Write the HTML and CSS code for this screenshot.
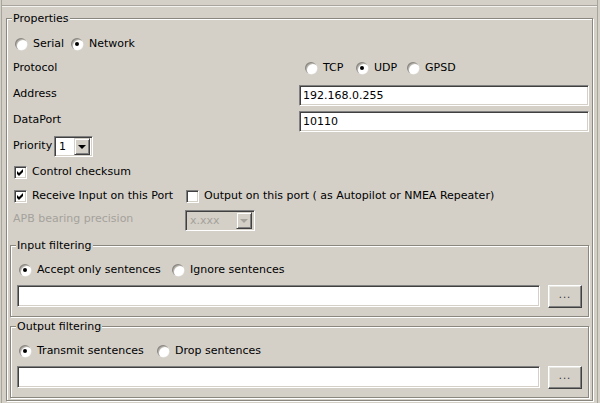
FILE: index.html
```html
<!DOCTYPE html>
<html>
<head>
<meta charset="utf-8">
<link rel="stylesheet" href="styles.css">
</head>
<body>
<div class="frame">
  <div class="topstrip"></div>
  <div class="group props">
    <div class="group-title title-props">Properties</div>

    <div class="row r-conn">
      <label class="opt w-serial"><span class="radio"></span>Serial</label>
      <label class="opt"><span class="radio on"></span>Network</label>
    </div>

    <div class="field r-proto">
      <span class="lbl">Protocol</span>
      <div class="proto">
        <label class="opt w-tcp"><span class="radio"></span>TCP</label>
        <label class="opt w-udp"><span class="radio on"></span>UDP</label>
        <label class="opt"><span class="radio"></span>GPSD</label>
      </div>
    </div>

    <div class="field r-addr">
      <span class="lbl lbl-top">Address</span>
      <div class="input grow">192.168.0.255</div>
    </div>

    <div class="field r-port">
      <span class="lbl lbl-top">DataPort</span>
      <div class="input grow">10110</div>
    </div>

    <div class="row r-prio">
      <span class="lbl-prio">Priority</span>
      <div class="combo combo-prio">
        <span class="combo-text">1</span>
        <span class="combo-btn"><span class="arrow"></span></span>
      </div>
    </div>

    <div class="row r-chk1">
      <label class="opt"><span class="check on"><svg width="13" height="13" viewBox="0 0 13 13"><polygon points="3,5 5,7 9,3 9,6 5,10 3,8" fill="#000"/></svg></span>Control checksum</label>
    </div>

    <div class="row twocol r-chk2">
      <label class="opt"><span class="check on"><svg width="13" height="13" viewBox="0 0 13 13"><polygon points="3,5 5,7 9,3 9,6 5,10 3,8" fill="#000"/></svg></span>Receive Input on this Port</label>
      <label class="opt"><span class="check"></span>Output on this port ( as Autopilot or NMEA Repeater)</label>
    </div>

    <div class="row twocol r-apb">
      <span class="disabled lbl-top">APB bearing precision</span>
      <div class="combo combo-apb">
        <span class="combo-text">x.xxx</span>
        <span class="combo-btn"><span class="arrow"></span></span>
      </div>
    </div>

    <div class="group sub g-in">
      <div class="group-title title-sub">Input filtering</div>
      <div class="row sub-radios">
        <label class="opt w-accept"><span class="radio on"></span>Accept only sentences</label>
        <label class="opt"><span class="radio"></span>Ignore sentences</label>
      </div>
      <div class="editrow">
        <div class="input grow"></div>
        <div class="btn">...</div>
      </div>
    </div>

    <div class="group sub g-out">
      <div class="group-title title-sub">Output filtering</div>
      <div class="row sub-radios">
        <label class="opt w-transmit"><span class="radio on"></span>Transmit sentences</label>
        <label class="opt"><span class="radio"></span>Drop sentences</label>
      </div>
      <div class="editrow">
        <div class="input grow"></div>
        <div class="btn">...</div>
      </div>
    </div>
  </div>
</div>
</body>
</html>
```

FILE: styles.css
```css
html, body {
  margin: 0;
  padding: 0;
}

body {
  width: 600px;
  height: 403px;
  overflow: hidden;
  background: #d4d0c8;
  color: #000;
  font-family: "DejaVu Sans", Verdana, sans-serif;
  font-size: 11px;
  line-height: 16px;
}

.frame {
  margin-left: 1px;
  width: 597px;
  height: 403px;
  box-sizing: border-box;
  border-left: 1px solid #a8a59f;
  border-right: 1px solid #a8a59f;
  padding: 0 4px 0 4px;
}

.topstrip {
  height: 5px;
  margin: 0 -4px 0 -4px;
  border-bottom: 1px solid #a8a59f;
  box-shadow: 0 1px 0 #f4f3f0;
}

/* etched group box */
.group {
  border: 1px solid #8a877f;
  box-shadow: inset 1px 1px 0 #fff, 1px 1px 0 #fff;
}

.group-title {
  width: max-content;
  line-height: 14px;
  margin-top: -7px;
  padding: 0 1px;
  background: #d4d0c8;
}

.props {
  margin-top: 12px;
  width: 587px;
  box-sizing: border-box;
  padding: 0 3px 2px 3px;
}

.title-props {
  margin-left: 2px;
}

.row {
  display: flex;
  align-items: center;
  height: 16px;
}

.props > .row,
.props > .field {
  padding-left: 3px;
}

.field {
  display: flex;
  align-items: flex-start;
}

.lbl {
  width: 286px;
  flex: none;
}

.lbl-top {
  margin-top: 1px;
}

.grow {
  flex: 1;
}

.opt {
  display: flex;
  align-items: center;
  white-space: nowrap;
  margin-right: 11px;
}

.radio {
  flex: none;
  position: relative;
  width: 12px;
  height: 12px;
  margin: 0 6px 0 2px;
  border-radius: 50%;
  background: #fff;
  box-shadow: inset 1px 1px 0 #8c8982, inset 2px 2px 0 #b8b5ae, 0.5px 0.5px 0 #f0efec;
}

.radio.on::after {
  content: "";
  position: absolute;
  left: 4px;
  top: 4px;
  width: 4px;
  height: 4px;
  border-radius: 50%;
  background: #000;
}

.check {
  flex: none;
  display: block;
  width: 11px;
  height: 11px;
  margin: 0 5px 0 1px;
  background: #fff;
  border: 1px solid;
  border-color: #808080 #fff #fff #808080;
  box-shadow: inset 1px 1px 0 #404040, inset -1px -1px 0 #d4d0c8;
  position: relative;
}

.check svg {
  position: absolute;
  left: -1px;
  top: -1px;
}

/* rows */
.r-conn { margin-top: 10px; }
.w-serial { width: 45px; }

.r-proto { margin-top: 8px; height: 16px; align-items: center; }
.proto {
  display: flex;
  align-items: center;
  padding-left: 4px;
}
.w-tcp { width: 40px; }
.w-udp { width: 40px; }

.input {
  height: 21px;
  box-sizing: border-box;
  background: #fff;
  border: 1px solid;
  border-color: #808080 #fff #fff #808080;
  box-shadow: inset 1px 1px 0 #404040, inset -1px -1px 0 #d4d0c8;
  padding: 2px 3px 0 3px;
  line-height: 16px;
  white-space: nowrap;
}

.r-addr { margin-top: 9px; }
.r-port { margin-top: 5px; }

.r-prio {
  margin-top: 4px;
  height: 21px;
  align-items: flex-start;
}

.lbl-prio {
  width: 41px;
  margin-top: 2px;
  flex: none;
  white-space: nowrap;
}

.combo {
  display: flex;
  align-items: center;
  box-sizing: border-box;
  height: 21px;
  border: 1px solid;
  border-color: #808080 #fff #fff #808080;
  box-shadow: inset 1px 1px 0 #404040, inset -1px -1px 0 #d4d0c8;
  padding: 2px;
  background: #fff;
}

.combo-text {
  flex: 1;
  padding-left: 2px;
  line-height: 15px;
}

.combo-btn {
  flex: none;
  width: 16px;
  height: 17px;
  box-sizing: border-box;
  background: #d4d0c8;
  border: 1px solid;
  border-color: #d4d0c8 #404040 #404040 #d4d0c8;
  box-shadow: inset 1px 1px 0 #fff, inset -1px -1px 0 #808080;
  display: flex;
  align-items: center;
  justify-content: center;
}

.arrow {
  width: 0;
  height: 0;
  border-left: 4px solid transparent;
  border-right: 4px solid transparent;
  border-top: 4px solid #000;
  margin-top: 1px;
}

.combo-prio {
  width: 39px;
}

.r-chk1 { margin-top: 7px; }
.r-chk2 { margin-top: 8px; }

.twocol {
  display: grid;
  grid-template-columns: 172px auto;
  align-items: center;
}

.r-apb {
  margin-top: 6px;
  height: 21px;
  align-items: start;
}

.disabled {
  color: #a5a29b;
  white-space: nowrap;
}

.combo-apb {
  width: 70px;
  background: #d4d0c8;
  color: #a5a29b;
}

.combo-apb .arrow {
  border-top-color: #a5a29b;
}

/* sub groups */
.sub {
  box-sizing: border-box;
  width: 579px;
  padding: 0 6px 8px 6px;
}

.g-in { margin-top: 14px; }
.g-out { margin-top: 9px; }

.title-sub {
  margin-left: -1px;
}

.sub-radios {
  margin-top: 9px;
}

.w-accept { width: 142px; }
.w-transmit { width: 127px; }

.editrow {
  display: flex;
  align-items: flex-start;
  margin-top: 7px;
  gap: 8px;
}

.editrow .input {
  height: 22px;
}

.btn {
  flex: none;
  width: 34px;
  height: 23px;
  box-sizing: border-box;
  background: #d4d0c8;
  border: 1px solid;
  border-color: #fff #404040 #404040 #fff;
  box-shadow: inset -1px -1px 0 #808080, inset 1px 1px 0 #e8e6e1;
  text-align: center;
  line-height: 17px;
  font-size: 10px;
  letter-spacing: 1px;
  color: #333;
}
```
